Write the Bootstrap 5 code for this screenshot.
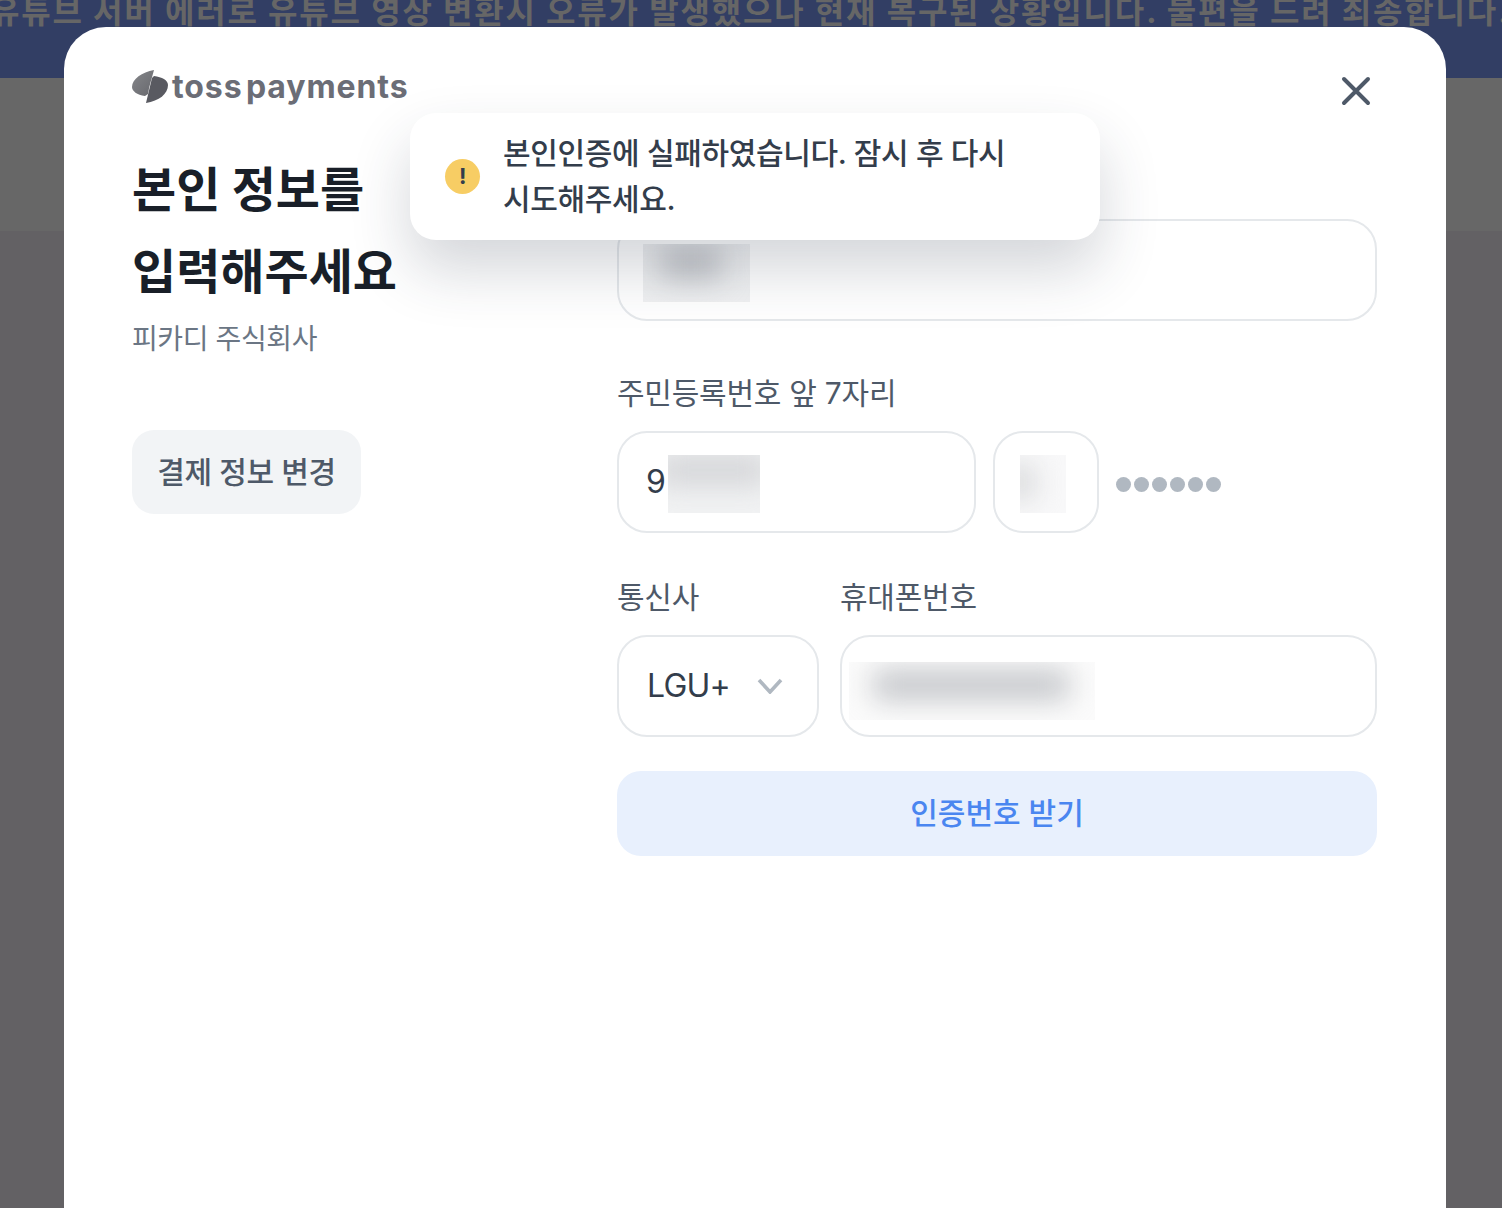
<!DOCTYPE html>
<html lang="ko">
<head>
  <meta charset="UTF-8">
  <meta name="viewport" content="width=device-width, initial-scale=1">
  <title>토스페이먼츠 본인인증</title>
  <link href="https://cdn.jsdelivr.net/npm/bootstrap@5.3.0/dist/css/bootstrap.min.css" rel="stylesheet">
  <style>
    html, body { height: 100%; }
    body {
      background: #636164;
      overflow: hidden;
      font-family: Inter, "Noto Sans CJK KR", sans-serif;
      position: relative;
    }
    .top-banner {
      height: 78px;
      background: #323e64;
      color: #666;
      font-size: 32px;
      font-weight: 700;
      letter-spacing: 1.8px;
      line-height: 1;
      white-space: nowrap;
      overflow: hidden;
    }
    .top-banner span { display: block; margin: -4px 0 0 -10px; }
    .top-header { height: 153px; background: #676767; }

    .pay-modal {
      position: absolute;
      top: 27px;
      left: 64px;
      width: 1382px;
      bottom: 0;
      background: #fff;
      border-radius: 42px 42px 0 0;
      padding: 42px 68px 0;
    }
    .logo-row { height: 36px; color: #6b6d76; }
    .logo-name {
      font-family: Inter, sans-serif;
      font-size: 32px;
      font-weight: 700;
      letter-spacing: .9px;
      word-spacing: -5px;
      line-height: 36px;
    }
    .close-x { position: absolute; top: 48px; right: 74px; width: 32px; height: 32px; }

    .side-col { width: 485px; flex: none; }
    .main-col { width: 760px; flex: none; }
    .title-text {
      font-size: 48px;
      font-weight: 700;
      line-height: 82px;
      color: #191f28;
      margin: 44px 0 0;
    }
    .shop-name { font-size: 28px; letter-spacing: -.4px; line-height: 40px; color: #6b7684; margin-top: 6px; }
    .back-btn {
      margin-top: 71px;
      width: 229px;
      height: 84px;
      background: #f2f4f6;
      color: #4e5968;
      font-size: 30px;
      font-weight: 500;
      letter-spacing: -.4px;
      border: 0;
      border-radius: 22px;
    }

    .field-label { font-size: 30px; letter-spacing: -.25px; line-height: 44px; color: #4e5968; margin-bottom: 16px; }
    .fake-input {
      position: relative;
      height: 102px;
      border: 2px solid #e5e8eb;
      border-radius: 30px;
      background: #fff;
      color: #333d4b;
      font-size: 32px;
      letter-spacing: -.8px;
      overflow: hidden;
    }
    .blur-box { position: absolute; overflow: hidden; background: #f1f2f3; }
    .blur-box i { position: absolute; display: block; background: #c4c6ca; filter: blur(14px); }
    .dots { gap: 3px; }
    .dots i { display: block; width: 15px; height: 15px; border-radius: 50%; background: #b0b8c1; }
    .submit-btn {
      margin-top: 34px;
      height: 85px;
      width: 100%;
      background: #e8f0fd;
      color: #4a86f0;
      font-size: 30px;
      font-weight: 500;
      border: 0;
      border-radius: 24px;
    }

    .warn-toast {
      position: absolute;
      top: 86px;
      left: 346px;
      width: 690px;
      height: 127px;
      background: #fff;
      border-radius: 26px;
      box-shadow: 0 30px 60px rgba(40, 50, 70, .2);
      padding: 17px 40px 0 35px;
      color: #333d4b;
      font-size: 30px;
      font-weight: 500;
      letter-spacing: -.35px;
      line-height: 46px;
    }
    .warn-dot {
      width: 35px;
      height: 35px;
      flex: none;
      border-radius: 50%;
      background: #f7cd64;
      color: #333d4b;
      font-size: 22px;
      font-weight: 700;
      line-height: 35px;
      text-align: center;
      margin: 29px -1px 0 0;
    }
  </style>
</head>
<body>
  <div class="top-banner"><span>유튜브 서버 에러로 유튜브 영상 변환시 오류가 발생했으나 현재 복구된 상황입니다. 불편을 드려 죄송합니다.</span></div>
  <div class="top-header"></div>

  <div class="pay-modal">
    <div class="logo-row d-flex align-items-center gap-1">
      <svg width="36" height="34" viewBox="0 0 36 34" aria-hidden="true">
        <defs>
          <linearGradient id="tossA" x1="0" y1="0" x2="1" y2="1"><stop offset="0" stop-color="#85868a"/><stop offset="1" stop-color="#67686d"/></linearGradient>
        </defs>
        <path d="M22 0 C10 2 0 9 0 17 C0 21 5 25 13 26 L16 24 C17 16 20 8 22 0Z" fill="url(#tossA)"/>
        <path d="M14 33 C27 31 36 24 36 15 C36 10 30 7 22 6 L20 8 C18 16 16 25 14 33Z" fill="#595a61"/>
      </svg>
      <span class="logo-name">toss payments</span>
    </div>

    <svg class="close-x" viewBox="0 0 32 32" aria-hidden="true">
      <path d="M4 4 L28 28 M28 4 L4 28" stroke="#4e5968" stroke-width="4" stroke-linecap="round" fill="none"/>
    </svg>

    <div class="d-flex">
      <div class="side-col">
        <h1 class="title-text">본인 정보를<br>입력해주세요</h1>
        <div class="shop-name">피카디 주식회사</div>
        <button type="button" class="back-btn d-block">결제 정보 변경</button>
      </div>
      <div class="main-col">
        <div style="height:114px"></div>
        <div class="fake-input">
          <div class="blur-box" style="left:24px;top:23px;width:107px;height:58px"><i style="left:18px;top:2px;width:60px;height:34px"></i></div>
        </div>

        <div class="field-label" style="margin-top:50px">주민등록번호 앞 7자리</div>
        <div class="d-flex align-items-center">
          <div class="fake-input d-flex align-items-center ps-4" style="width:359px">
            <span style="margin-left:3px">9</span>
            <div class="blur-box" style="left:49px;top:22px;width:92px;height:58px"><i style="left:-10px;top:0;width:110px;height:30px;background:#d3d4d7"></i></div>
          </div>
          <div class="fake-input" style="width:106px;margin-left:17px">
            <div class="blur-box" style="left:25px;top:22px;width:46px;height:58px;background:#f8f8f9"><i style="left:-14px;top:10px;width:28px;height:34px;background:#d5d6d8"></i></div>
          </div>
          <div class="dots d-flex" style="margin:4px 0 0 17px">
            <i></i><i></i><i></i><i></i><i></i><i></i>
          </div>
        </div>

        <div class="d-flex" style="margin-top:42px;gap:21px">
          <div style="width:202px">
            <div class="field-label">통신사</div>
            <div class="fake-input d-flex align-items-center justify-content-between" style="padding:0 34px 0 28px">
              <span>LGU+</span>
              <svg width="26" height="16" viewBox="0 0 26 16" aria-hidden="true"><path d="M2 2 L13 14 L24 2" stroke="#b0b8c1" stroke-width="3.6" fill="none"/></svg>
            </div>
          </div>
          <div class="flex-grow-1">
            <div class="field-label">휴대폰번호</div>
            <div class="fake-input">
              <div class="blur-box" style="left:7px;top:25px;width:246px;height:58px;background:#fbfbfb"><i style="left:24px;top:8px;width:196px;height:30px"></i></div>
            </div>
          </div>
        </div>

        <button type="button" class="submit-btn d-block">인증번호 받기</button>
      </div>
    </div>

    <div class="warn-toast d-flex gap-4">
      <div class="warn-dot">!</div>
      <div>본인인증에 실패하였습니다. 잠시 후 다시<br>시도해주세요.</div>
    </div>
  </div>

  <script src="https://cdn.jsdelivr.net/npm/bootstrap@5.3.0/dist/js/bootstrap.bundle.min.js"></script>
</body>
</html>
